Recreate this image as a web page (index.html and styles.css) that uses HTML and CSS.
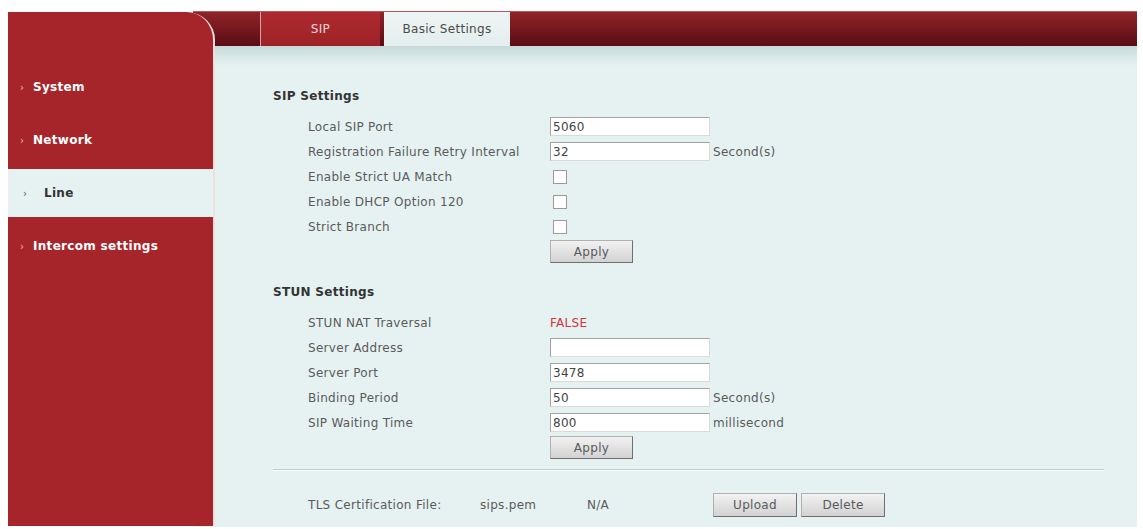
FILE: index.html
```html
<!DOCTYPE html>
<html lang="en">
<head>
<meta charset="utf-8">
<title>Line - SIP Basic Settings</title>
<link rel="stylesheet" href="styles.css">
</head>
<body>
<div class="app">
  <aside class="sidebar">
    <ul class="nav">
      <li class="nav-item"><span class="arrow">›</span>System</li>
      <li class="nav-item"><span class="arrow">›</span>Network</li>
      <li class="nav-item active"><span class="arrow">›</span>Line</li>
      <li class="nav-item"><span class="arrow">›</span>Intercom settings</li>
    </ul>
  </aside>
  <main class="main">
    <div class="topbar">
      <div class="tabs">
        <div class="tab tab-sip">SIP</div>
        <div class="tab tab-basic">Basic Settings</div>
      </div>
    </div>
    <div class="content">
      <section class="section">
        <h3 class="section-title">SIP Settings</h3>
        <div class="row"><span class="label">Local SIP Port</span><input class="text-input" type="text" value="5060"></div>
        <div class="row"><span class="label">Registration Failure Retry Interval</span><input class="text-input" type="text" value="32"><span class="unit">Second(s)</span></div>
        <div class="row"><span class="label">Enable Strict UA Match</span><input class="checkbox" type="checkbox"></div>
        <div class="row"><span class="label">Enable DHCP Option 120</span><input class="checkbox" type="checkbox"></div>
        <div class="row"><span class="label">Strict Branch</span><input class="checkbox" type="checkbox"></div>
        <div class="row"><span class="label"></span><button class="button">Apply</button></div>
      </section>
      <section class="section">
        <h3 class="section-title">STUN Settings</h3>
        <div class="row"><span class="label">STUN NAT Traversal</span><span class="status-false">FALSE</span></div>
        <div class="row"><span class="label">Server Address</span><input class="text-input" type="text" value=""></div>
        <div class="row"><span class="label">Server Port</span><input class="text-input" type="text" value="3478"></div>
        <div class="row"><span class="label">Binding Period</span><input class="text-input" type="text" value="50"><span class="unit">Second(s)</span></div>
        <div class="row"><span class="label">SIP Waiting Time</span><input class="text-input" type="text" value="800"><span class="unit">millisecond</span></div>
        <div class="row"><span class="label"></span><button class="button">Apply</button></div>
      </section>
      <div class="divider"></div>
      <div class="tls-row">
        <span class="tls-label">TLS Certification File:</span>
        <span class="tls-file">sips.pem</span>
        <span class="tls-status">N/A</span>
        <div class="tls-actions">
          <button class="button button-wide">Upload</button>
          <button class="button button-wide">Delete</button>
        </div>
      </div>
    </div>
  </main>
</div>
</body>
</html>
```
FILE: styles.css
```css
html, body {
  margin: 0;
  padding: 0;
  background: #ffffff;
}

body {
  font-family: "DejaVu Sans", "Liberation Sans", sans-serif;
  font-size: 12px;
  letter-spacing: 0.3px;
  color: #5a5a5a;
}

.app {
  display: flex;
  align-items: flex-start;
  padding: 11px 6px 2px 8px;
}

/* ---------- Sidebar ---------- */
.sidebar {
  position: relative;
  z-index: 1;
  box-sizing: border-box;
  width: 207px;
  height: 514px;
  margin-top: 1px;
  padding-top: 51px;
  background: #a6252a;
  border-right: 2px solid #f3dede;
  border-top-right-radius: 28px;
}

.nav {
  list-style: none;
  margin: 0;
  padding: 0;
  display: flex;
  flex-direction: column;
  gap: 5px;
}

.nav-item {
  display: flex;
  align-items: center;
  height: 48px;
  padding-left: 12px;
  color: #ffffff;
  font-weight: bold;
  font-size: 12px;
}

.arrow {
  width: 13px;
  font-size: 10px;
  font-weight: normal;
  color: #f2b8b8;
}

.nav-item.active {
  background: #e6f1f2;
  color: #333333;
  padding-left: 15px;
}

.nav-item.active .arrow {
  width: 21px;
  color: #555555;
}

/* ---------- Main ---------- */
.main {
  flex: 1;
  margin-left: -22px;
  display: flex;
  flex-direction: column;
}

.topbar {
  height: 35px;
  background: linear-gradient(#902429, #5a0c14);
  border-top: 1px solid #b85a5e;
  box-sizing: border-box;
  display: flex;
  align-items: flex-end;
  padding-left: 67px;
}

.tabs {
  display: flex;
  gap: 4px;
  height: 34px;
}

.tab {
  display: flex;
  align-items: center;
  justify-content: center;
  height: 34px;
  font-size: 12px;
}

.tab-sip {
  width: 119px;
  background: linear-gradient(#ad2a2f, #9d2227);
  color: #f5d9d9;
  border-left: 1px solid #d9a3a5;
}

.tab-basic {
  width: 126px;
  background: linear-gradient(#eef4f4, #e4eeee);
  color: #4a4a4a;
}

.content {
  box-sizing: border-box;
  height: 481px;
  padding: 42px 33px 0 80px;
  background: linear-gradient(#c6d9d9 0, #dbe9e9 12px, #e6f2f2 20px, #e6f2f2 100%);
}

.section + .section {
  margin-top: 20px;
}

.section-title {
  margin: 0 0 10px;
  font-size: 12px;
  line-height: 16px;
  font-weight: bold;
  color: #333333;
}

.row {
  display: flex;
  align-items: center;
  height: 25px;
  padding-left: 35px;
}

.label {
  width: 242px;
  flex: none;
}

.text-input {
  box-sizing: border-box;
  width: 160px;
  height: 19px;
  margin: 0;
  padding: 0 2px;
  border: 1px solid;
  border-color: #a3a3a3 #dadada #dadada #a3a3a3;
  background: #ffffff;
  font-family: "DejaVu Sans", "Liberation Sans", sans-serif;
  font-size: 12px;
  letter-spacing: 0.3px;
  color: #444444;
  outline: none;
}

.unit {
  margin-left: 3px;
}

.checkbox {
  appearance: none;
  -webkit-appearance: none;
  box-sizing: border-box;
  width: 14px;
  height: 14px;
  margin: 0 0 0 3px;
  border: 1px solid #9a9a9a;
  background: #ffffff;
}

.status-false {
  color: #d3343a;
}

.button {
  box-sizing: border-box;
  width: 83px;
  height: 23px;
  padding: 0;
  border: 1px solid;
  border-color: #b0b0b0 #6f6f6f #6f6f6f #b0b0b0;
  background: linear-gradient(#f2f2f2, #d2d2d2);
  font-family: "DejaVu Sans", "Liberation Sans", sans-serif;
  font-size: 12px;
  letter-spacing: 0.3px;
  color: #5a5a5a;
}

.button-wide {
  width: 84px;
  height: 24px;
}

.divider {
  margin-top: 9px;
  border-top: 1px solid #c4cdcd;
  border-bottom: 1px solid #f6fbfb;
}

.tls-row {
  display: flex;
  align-items: center;
  height: 24px;
  margin-top: 22px;
  padding-left: 35px;
}

.tls-label {
  width: 172px;
}

.tls-file {
  width: 107px;
}

.tls-status {
  width: 126px;
}

.tls-actions {
  display: flex;
  gap: 4px;
}
```
